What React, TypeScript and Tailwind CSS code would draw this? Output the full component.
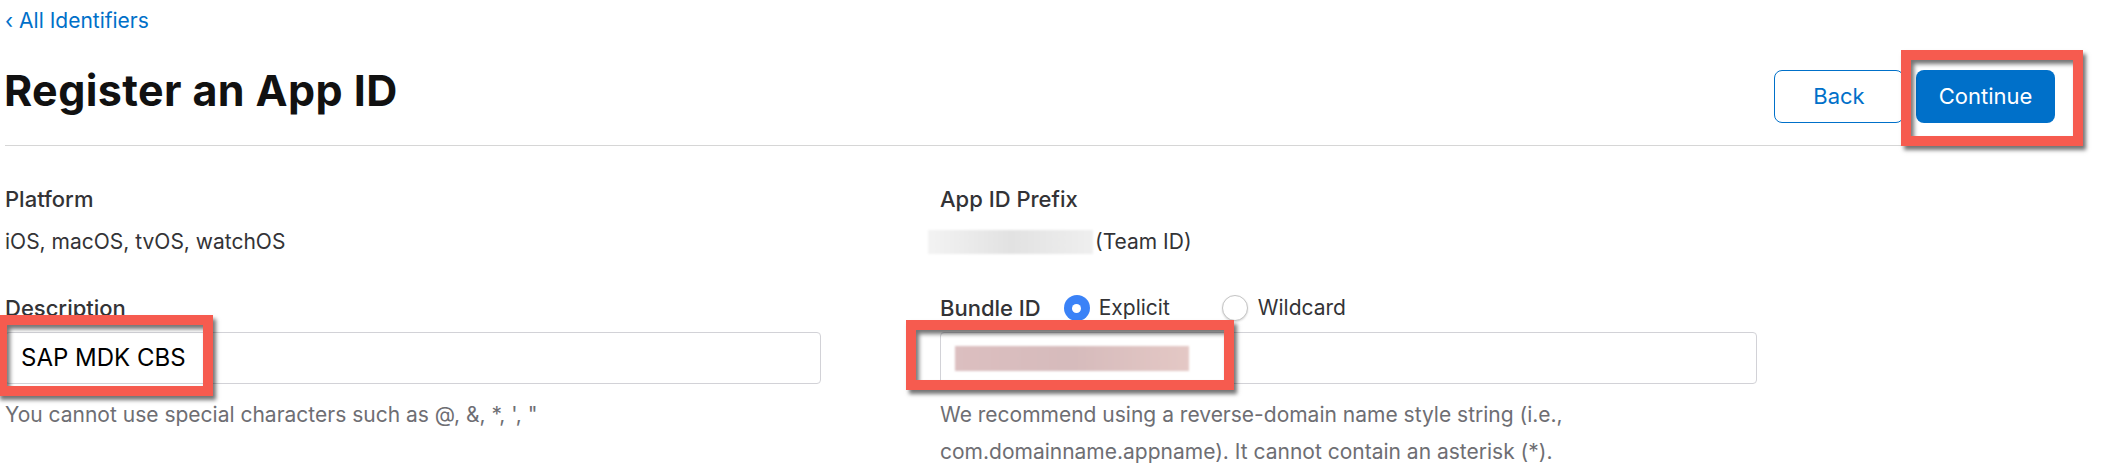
const RedBox = ({ className }: { className: string }) => (
  <div
    className={`absolute pointer-events-none border-[10px] border-[#f65b4f] shadow-[3px_4px_4px_rgba(0,0,0,0.55),inset_3px_4px_4px_rgba(0,0,0,0.55)] ${className}`}
  />
)

const App = () => {
  return (
    <div className="w-[2114px] h-[474px] overflow-hidden bg-white pl-[5px] pr-[38px] font-['Inter','Liberation_Sans',sans-serif] text-[#333336]">
      <a className="block pt-[8px] text-[21px] leading-[26px] text-[#0070c9]">
        <span className="mr-[6px]">‹</span>All Identifiers
      </a>

      <div className="flex justify-between items-start">
        <h1 className="mt-[31px] text-[43px] leading-[50px] font-bold text-[#111111] -ml-[1px] tracking-[0.4px]">
          Register an App ID
        </h1>
        <div className="mt-[36px] mr-[21px] flex gap-[12px]">
          <button className="h-[53px] w-[130px] rounded-[8px] border-[1.5px] border-[#0070c9] text-[22px] text-[#0070c9]">
            Back
          </button>
          <div className="relative">
            <button className="h-[53px] w-[139px] rounded-[8px] bg-[#0070c9] text-[22px] text-white">
              Continue
            </button>
            <RedBox className="-left-[15px] -top-[20px] w-[182px] h-[96px]" />
          </div>
        </div>
      </div>

      <div className="mt-[22px] border-t border-[#d6d6d6]" />

      <div className="grid grid-cols-[935px_935px]">
        <div>
          <div className="mt-[40px] text-[22px] leading-[26px] font-medium">Platform</div>
          <div className="mt-[17px] text-[21px] leading-[26px]">iOS, macOS, tvOS, watchOS</div>
          <div className="mt-[40px] text-[22px] leading-[26px] font-medium">Description</div>
          <div className="relative mt-[11px] w-[816px]">
            <div className="h-[52px] rounded-[4px] border border-[#d2d2d7] pl-[15px] flex items-center text-[24px] text-black">
              SAP MDK CBS
            </div>
            <RedBox className="-left-[8px] -top-[17px] w-[216px] h-[81px]" />
          </div>
          <p className="mt-[12px] text-[21px] leading-[37px] text-[#6e6e73]">
            You cannot use special characters such as @, &amp;, *, ', "
          </p>
        </div>

        <div>
          <div className="mt-[40px] text-[22px] leading-[26px] font-medium">App ID Prefix</div>
          <div className="mt-[17px] flex items-center text-[21px] leading-[26px]">
            <span className="-ml-[12px] mr-[2px] h-[24px] w-[165px] bg-gradient-to-r from-[#f3f3f3] via-[#e2e2e2] to-[#efefef] blur-[1px]" />
            (Team ID)
          </div>
          <div className="mt-[40px] flex items-center h-[26px] text-[21px]">
            <span className="font-medium text-[22px]">Bundle ID</span>
            <span className="ml-[23px] flex items-center">
              <span className="h-[26px] w-[26px] rounded-full bg-[#3a82f7] flex items-center justify-center">
                <span className="h-[9px] w-[9px] rounded-full bg-white" />
              </span>
              <span className="ml-[9px]">Explicit</span>
            </span>
            <span className="ml-[52px] flex items-center">
              <span className="h-[26px] w-[26px] rounded-full border border-[#c4c4c4] bg-white shadow-[0_1px_2px_rgba(0,0,0,0.15)]" />
              <span className="ml-[10px]">Wildcard</span>
            </span>
          </div>
          <div className="relative mt-[11px] w-[817px]">
            <div className="h-[52px] rounded-[4px] border border-[#d2d2d7] pl-[14px] flex items-center">
              <span className="h-[25px] w-[234px] bg-gradient-to-r from-[#dcbfc0] via-[#d6bbbc] to-[#e4c8c5] blur-[1px]" />
            </div>
            <RedBox className="-left-[34px] -top-[12px] w-[328px] h-[70px]" />
          </div>
          <p className="mt-[12px] text-[21px] leading-[37px] text-[#6e6e73]">
            We recommend using a reverse-domain name style string (i.e.,
            <br />
            com.domainname.appname). It cannot contain an asterisk (*).
          </p>
        </div>
      </div>
    </div>
  )
}

export default App
